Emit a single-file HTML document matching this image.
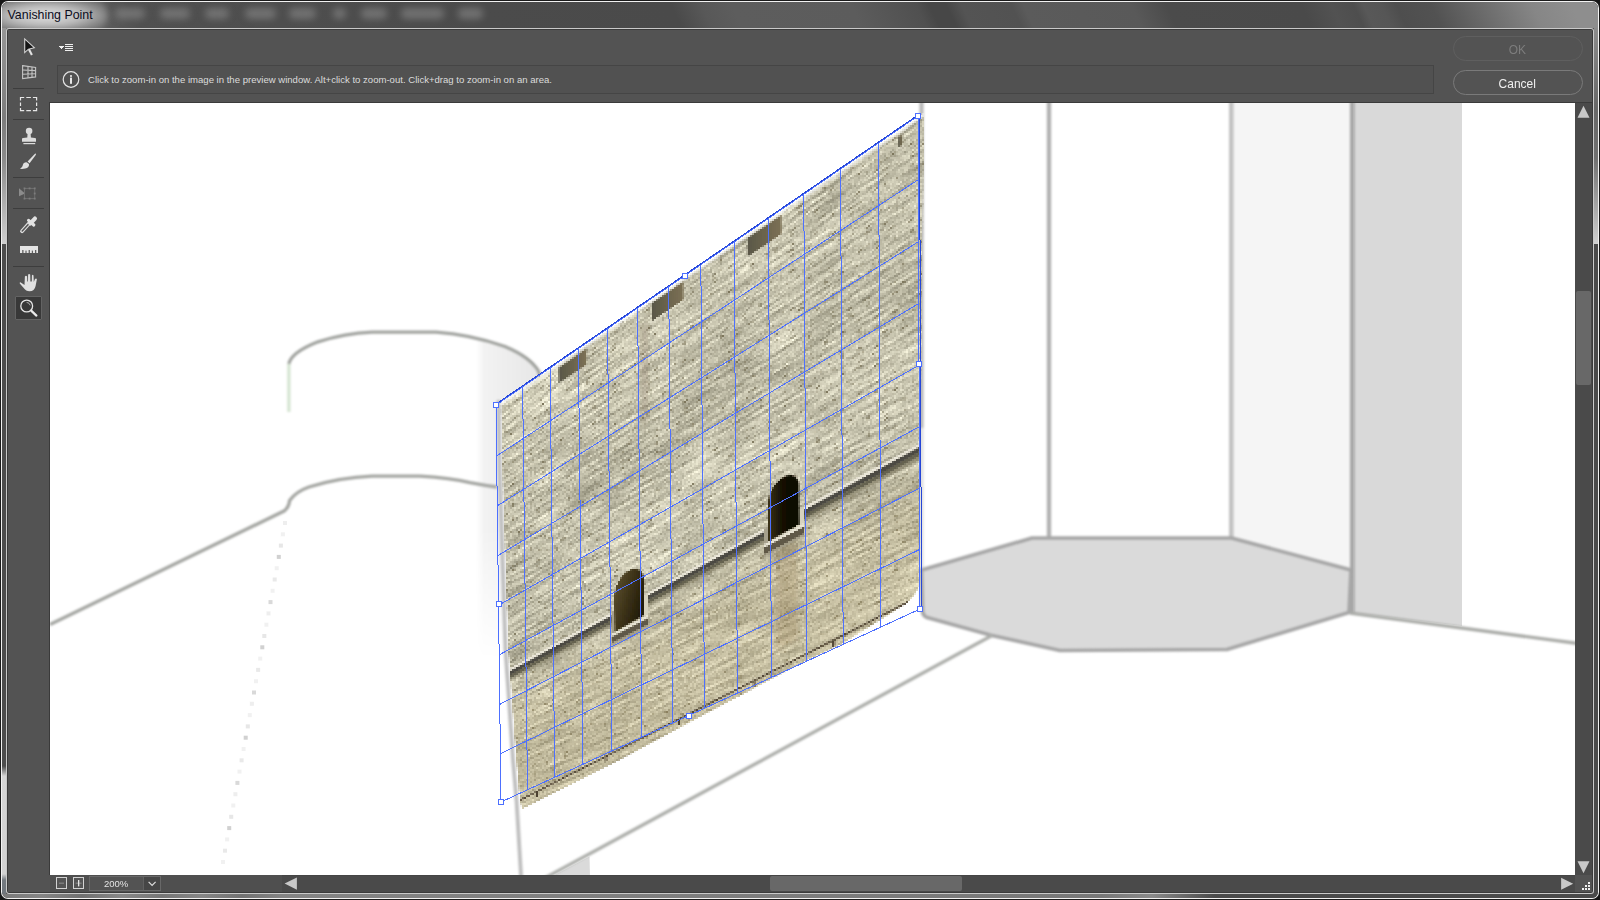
<!DOCTYPE html>
<html><head><meta charset="utf-8"><title>Vanishing Point</title>
<style>
*{box-sizing:border-box;margin:0;padding:0}
html,body{width:1600px;height:900px;overflow:hidden;background:#161616;font-family:"Liberation Sans",sans-serif}
.abs{position:absolute}
#win{position:absolute;left:0;top:0;width:1600px;height:900px;border-radius:8px;background:#1b1b1b;overflow:hidden}
#hl{position:absolute;left:1px;top:1px;width:1598px;height:898px;border-radius:7px;background:#f2f2f2;overflow:hidden}
#glass{position:absolute;left:1px;top:1px;width:1596px;height:896px;border-radius:6px;background:#4c4c4c;overflow:hidden}
/* all glass children are in glass coords (offset 2,2) */
#tb{position:absolute;left:0;top:0;width:1596px;height:26px;overflow:hidden;background:#4c4c4c}
#tbi{position:absolute;left:-20px;top:0;width:1680px;height:26px;transform-origin:0 0;transform:skewX(24.8deg);background:linear-gradient(90deg,#5c5c5c 18px,#5a5a5a 118px,#505050 148px,#4b4b4b 498px,#4a4a4a 688px,#585858 718px,#5d5d5d 748px,#5c5c5c 868px,#505050 933px,#474747 946px,#474747 963px,#545454 978px,#525252 1028px,#5b5b5b 1040px,#595959 1148px,#4b4b4b 1183px,#4a4a4a 1318px,#525252 1348px,#4e4e4e 1370px,#585858 1380px,#565656 1398px,#4e4e4e 1413px,#525252 1448px,#6c6c6c 1498px,#868686 1548px,#8e8e8e 1588px,#8e8e8e 1678px)}
#ttlglow{position:absolute;left:-18px;top:-3px;width:124px;height:33px;border-radius:17px;background:radial-gradient(ellipse at 50% 50%,rgba(255,255,255,.8) 0%,rgba(255,255,255,.62) 40%,rgba(255,255,255,.25) 70%,rgba(255,255,255,0) 100%);filter:blur(3px)}
.blob{position:absolute;top:6px;height:11px;border-radius:5px;background:#888;filter:blur(3.5px);opacity:.62}
#gl{position:absolute;left:0;top:26px;width:4px;height:866px;background:linear-gradient(180deg,#969696 0px,#7c7c7c 90px,#8a8a8a 130px,#cfcfcf 216px,#4d4d4d 216.5px,#4d4d4d 738px,#d6d6d6 748px,#d2d2d2 846px,#747a80 852px,#70767c 866px)}
#gr{position:absolute;left:1592px;top:26px;width:4px;height:866px;background:linear-gradient(180deg,#8c8c8c 0px,#686868 80px,#707070 130px,#d0d0d0 216px,#4a4a4a 216.5px,#4a4a4a 866px)}
#gb{position:absolute;left:0;top:892px;width:1596px;height:4px;background:linear-gradient(90deg,#7a7a7a 0,#858585 40px,#707070 80px,#888 120px,#767676 160px,#868686 200px,#727272 240px,#848484 280px,#787878 1100px,#8a8a8a 1150px,#4a4a4a 1213px,#4a4a4a 1596px)}
#inl{position:absolute;left:6px;top:28px;width:1588px;height:866px;border-radius:3px;background:#c9c9c9}
#ind{position:absolute;left:7px;top:29px;width:1586px;height:864px;border-radius:2px;background:#3b3b3b}
#c{position:absolute;left:8px;top:30px;width:1584px;height:862px;background:#535353;overflow:hidden}
/* content coords: offset (8,30) */
#title{position:absolute;left:7.5px;top:7px;font-size:12.4px;line-height:16px;color:#0c0c1c;white-space:nowrap;letter-spacing:0}
.sep{position:absolute;left:5px;width:31px;height:1px;background:#3d3d3d}
#info{position:absolute;left:49px;top:35px;width:1377px;height:29px;border:1px solid #454545;background:#515151}
#infotxt{position:absolute;left:80px;top:42.5px;font-size:9.57px;line-height:14px;color:#dcdcdc;white-space:nowrap}
.btn{position:absolute;left:1444.5px;width:130px;height:25px;border-radius:12.5px;text-align:center;font-size:13px;line-height:25px}
.btn span{display:inline-block;transform:scaleX(.92);transform-origin:50% 50%}
#ok{top:5.5px;border:1px solid #5f5f5f;color:#7d7d7d}
#cancel{top:39.5px;border:1px solid #7a7a7a;color:#f0f0f0}
#cv{position:absolute;left:41px;top:72px;width:1526px;height:773px;background:#3a3a3a}
#cvw{position:absolute;left:42px;top:73px;width:1525px;height:772px;background:#fff;overflow:hidden}
#vs{position:absolute;left:1567px;top:72px;width:17px;height:773px;background:#4a4a4a;border-top:1px solid #3b3b3b}
#vthumb{position:absolute;left:1568px;top:261px;width:15px;height:94px;border-radius:2px;background:#686868}
#hsl{position:absolute;left:42px;top:845px;width:232px;height:17px;background:#4f4f4f}
#hs{position:absolute;left:274px;top:845px;width:1293px;height:17px;background:#4a4a4a;border-top:1px solid #454545}
#hthumb{position:absolute;left:762px;top:846px;width:192px;height:15px;border-radius:2px;background:#686868}
#corner{position:absolute;left:1567px;top:845px;width:17px;height:17px;background:#535353}
.dot{position:absolute;width:2px;height:2px;background:#f0f0f0}
.zb{position:absolute;top:847px;width:11px;height:12px;border:1px solid #d2d2d2;background:#555}
#zf{position:absolute;left:81px;top:846px;width:72px;height:15px;border:1px solid #686868;background:#535353}
#zdd{position:absolute;left:135px;top:847px;width:17px;height:13px;background:#464646;border-left:1px solid #606060}
#ztxt{position:absolute;left:81px;top:846px;width:54px;height:15px;text-align:center;font-size:9.5px;line-height:15px;color:#e4e4e4;padding-left:15px;text-align:left}
#zsel{position:absolute;left:7px;top:265.5px;width:27px;height:24.5px;border:1px solid #636363;background:#383838;border-radius:1px}
svg{position:absolute;left:0;top:0;overflow:visible}
</style></head><body>
<div id="win"><div id="hl"><div id="glass">
 <div id="tb"><div id="tbi"></div></div>
 <div class="blob" style="left:113px;width:30px"></div><div class="blob" style="left:158px;width:30px"></div>
 <div class="blob" style="left:203px;width:24px"></div><div class="blob" style="left:243px;width:31px"></div>
 <div class="blob" style="left:287px;width:27px"></div><div class="blob" style="left:331px;width:13px"></div>
 <div class="blob" style="left:359px;width:26px"></div><div class="blob" style="left:399px;width:43px"></div>
 <div class="blob" style="left:456px;width:25px"></div>
 <div id="ttlglow"></div>
 <div id="gl"></div><div id="gr"></div><div id="gb"></div>
</div></div>
<div id="inl"></div><div id="ind"></div>
<div id="title">Vanishing Point</div>
<div id="c">
 <!-- top bar -->
 <div id="info"></div>
 <div id="infotxt">Click to zoom-in on the image in the preview window. Alt+click to zoom-out. Click+drag to zoom-in on an area.</div>
 <div class="btn" id="ok"><span>OK</span></div>
 <div class="btn" id="cancel"><span>Cancel</span></div>
 <!-- toolbar separators -->
 <div class="sep" style="top:58px"></div><div class="sep" style="top:89px"></div>
 <div class="sep" style="top:147px"></div><div class="sep" style="top:178px"></div>
 <div class="sep" style="top:236px"></div>
 <div id="zsel"></div>
 <!-- canvas -->
 <div id="cv"></div>
 <div id="cvw">
<!-- background drawing -->
<svg width="1525" height="772" viewBox="50 103 1525 772">
<defs>
<filter id="bl" x="-5%" y="-5%" width="110%" height="110%"><feGaussianBlur stdDeviation="0.9"/></filter>
<filter id="bl2" x="-5%" y="-5%" width="110%" height="110%"><feGaussianBlur stdDeviation="0.7"/></filter>
<linearGradient id="shade" gradientUnits="userSpaceOnUse" x1="476" y1="0" x2="545" y2="0">
<stop offset="0" stop-color="#000" stop-opacity="0"/><stop offset="0.12" stop-color="#000" stop-opacity="0.05"/><stop offset="1" stop-color="#000" stop-opacity="0.1"/></linearGradient>
<linearGradient id="shadefade" gradientUnits="userSpaceOnUse" x1="0" y1="330" x2="0" y2="660">
<stop offset="0" stop-color="#fff"/><stop offset="0.6" stop-color="#fff"/><stop offset="1" stop-color="#000"/></linearGradient>
<mask id="shademask"><rect x="470" y="320" width="90" height="350" fill="url(#shadefade)"/></mask>
<clipPath id="cylclip"><path d="M476,700 L476,337 Q505,344 528,358 Q540,366 541,380 L541,700 Z"/></clipPath>
</defs>
<g filter="url(#bl2)">
 <rect x="1233" y="100" width="120" height="470" fill="#f5f5f5"/>
 <path d="M1354,100 L1462,100 L1462,626 L1354,613 Z" fill="#d9d9d9"/>
 <path d="M921.5,570 L1032,538 L1231.5,538 L1351,570 L1349,612.5 L1227,649.5 L1060,650.5 L992,635.5 L927,617.5 Q922.3,615.5 922.6,610 Z" fill="#dadada"/>
 <path d="M551,877 L589.5,856.5 L590,877 Z" fill="#dadada"/>
</g>
<g clip-path="url(#cylclip)"><rect x="476" y="330" width="70" height="340" fill="url(#shade)" mask="url(#shademask)"/></g>
<g filter="url(#bl)" fill="none" stroke-linecap="butt">
 <path d="M921.5,100 L921.5,428" stroke="#b8b8b8" stroke-width="4.2"/><path d="M921.5,428 L921.5,572" stroke="#e0e0e0" stroke-width="4.2"/>
 <path d="M1049,100 L1049,538" stroke="#b2b2b2" stroke-width="4.4"/>
 <path d="M1231.3,100 L1231.3,538" stroke="#c2c2c2" stroke-width="4.6"/>
 <path d="M1352.3,100 L1352.3,613" stroke="#a8a8a8" stroke-width="4.8"/>
 <path d="M921.5,570 L1032,538 L1231.5,538 L1351,570 L1349,612.5 L1227,649.5 L1060,650.5 L992,635.5 L927,617.5 Q922.3,615.5 922.6,610 Z" stroke="#a6a6a6" stroke-width="3.6" stroke-linejoin="round"/>
 <path d="M1350,613 L1580,643.8" stroke="#aaaca8" stroke-width="3.4"/>
 <path d="M992,635.5 L545,878" stroke="#adafab" stroke-width="3.4"/>
 <path d="M498.6,400 L499.5,470 L505.5,650 L509,700 L513,760 L516.5,800 L521.3,880" stroke="#bebebe" stroke-width="3.8" stroke-linejoin="round"/>
 <!-- cylinder -->
 <path d="M288.9,412 L288.9,364" stroke="#d4e4d0" stroke-width="3.2"/>
 <path d="M288.9,364 Q291,352.5 318,341.8 Q345,333.5 372,332.2 L436,332.2 Q470,334.5 505,346.5 Q530,357 538.5,371 Q541,378 541,384" stroke="#a2a4a0" stroke-width="3.3"/>
 <path d="M50,624.5 L284.5,510.8 Q289,507 289.6,500.5 Q296,491.5 309,487 Q340,477.5 372,476.2 L420,476.2 Q450,478 470,482.6 Q485,485.5 497,487" stroke="#a4a6a2" stroke-width="3.3"/>
</g>
<!-- dotted line -->
<g fill="#cfcfcf" filter="url(#bl2)">
<rect x="283.0" y="521.0" width="4" height="4" opacity="0.35"/>
<rect x="280.9" y="532.3" width="4" height="4" opacity="0.30"/>
<rect x="278.9" y="543.6" width="4" height="4" opacity="0.50"/>
<rect x="276.8" y="554.9" width="4" height="4" opacity="0.95"/>
<rect x="274.7" y="566.2" width="4" height="4" opacity="0.30"/>
<rect x="272.7" y="577.5" width="4" height="4" opacity="0.45"/>
<rect x="270.6" y="588.8" width="4" height="4" opacity="0.30"/>
<rect x="268.5" y="600.1" width="4" height="4" opacity="0.80"/>
<rect x="266.5" y="611.4" width="4" height="4" opacity="0.35"/>
<rect x="264.4" y="622.7" width="4" height="4" opacity="0.30"/>
<rect x="262.3" y="634.0" width="4" height="4" opacity="0.50"/>
<rect x="260.3" y="645.3" width="4" height="4" opacity="0.95"/>
<rect x="258.2" y="656.6" width="4" height="4" opacity="0.30"/>
<rect x="256.1" y="667.9" width="4" height="4" opacity="0.45"/>
<rect x="254.0" y="679.2" width="4" height="4" opacity="0.30"/>
<rect x="252.0" y="690.5" width="4" height="4" opacity="0.80"/>
<rect x="249.9" y="701.8" width="4" height="4" opacity="0.35"/>
<rect x="247.8" y="713.1" width="4" height="4" opacity="0.30"/>
<rect x="245.8" y="724.4" width="4" height="4" opacity="0.50"/>
<rect x="243.7" y="735.7" width="4" height="4" opacity="0.95"/>
<rect x="241.6" y="747.0" width="4" height="4" opacity="0.30"/>
<rect x="239.6" y="758.3" width="4" height="4" opacity="0.45"/>
<rect x="237.5" y="769.6" width="4" height="4" opacity="0.30"/>
<rect x="235.4" y="780.9" width="4" height="4" opacity="0.80"/>
<rect x="233.4" y="792.2" width="4" height="4" opacity="0.35"/>
<rect x="231.3" y="803.5" width="4" height="4" opacity="0.30"/>
<rect x="229.2" y="814.8" width="4" height="4" opacity="0.50"/>
<rect x="227.2" y="826.1" width="4" height="4" opacity="0.95"/>
<rect x="225.1" y="837.4" width="4" height="4" opacity="0.30"/>
<rect x="223.0" y="848.7" width="4" height="4" opacity="0.45"/>
<rect x="221.0" y="860.0" width="4" height="4" opacity="0.30"/>
</g>
</svg>
<!-- wall texture -->
<svg width="0" height="0"><defs><filter id="pix" filterUnits="userSpaceOnUse" x="0" y="0" width="1525" height="772" color-interpolation-filters="sRGB">
<feFlood x="0" y="0" width="1" height="1" flood-color="#000"/>
<feComposite width="2" height="2"/>
<feTile result="a"/>
<feComposite in="SourceGraphic" in2="a" operator="in" result="s"/>
<feOffset in="s" dx="1" dy="0" result="s1"/><feOffset in="s" dx="0" dy="1" result="s2"/><feOffset in="s" dx="1" dy="1" result="s3"/>
<feMerge result="pm"><feMergeNode in="s"/><feMergeNode in="s1"/><feMergeNode in="s2"/><feMergeNode in="s3"/></feMerge>
<feGaussianBlur in="pm" stdDeviation="0.45"/>
</filter></defs></svg>
<div style="position:absolute;left:0;top:0;width:1525px;height:772px;filter:url(#pix)">
<div style="position:absolute;left:0;top:0;width:1525px;height:772px;clip-path:polygon(450.5px 299.5px,868.5px 12.6px,873.6px 10.0px,872.5px 97.0px,869.9px 297.0px,870.2px 471.0px,868.5px 483.0px,863.0px 493.0px,856.0px 500.0px,792.0px 540.0px,750.0px 560.0px,650.0px 613.0px,570.0px 656.0px,471.5px 705.5px,469.5px 697.0px,466.0px 657.0px,461.5px 597.0px,458.0px 547.0px,452.0px 367.0px)">
<div style="position:absolute;left:-50px;top:-103px;width:530px;height:510px;transform-origin:0 0;transform:matrix3d(0.4733521435,-0.5985030139,0,-0.000368394682,0.01884421423,0.840574138,0,1.682145221e-05,0,0,1,0,496,405,0,1)">
<svg width="530" height="510" viewBox="0 0 530 510">
<defs>
<filter id="wall" x="0" y="0" width="100%" height="100%" color-interpolation-filters="sRGB">
 <feTurbulence type="fractalNoise" baseFrequency="0.33" numOctaves="1" seed="7"/>
 <feColorMatrix type="matrix" values="1 0 0 0 0 1 0 0 0 0 1 0 0 0 0 0 0 0 0 1" result="sp"/>
 <feTurbulence type="fractalNoise" baseFrequency="0.02 0.26" numOctaves="2" seed="11"/>
 <feColorMatrix type="matrix" values="1 0 0 0 0 1 0 0 0 0 1 0 0 0 0 0 0 0 0 1" result="st"/>
 <feTurbulence type="fractalNoise" baseFrequency="0.008 0.01" numOctaves="2" seed="5"/>
 <feColorMatrix type="matrix" values="1 0 0 0 0 1 0 0 0 0 1 0 0 0 0 0 0 0 0 1" result="lo"/>
 <feTurbulence type="fractalNoise" baseFrequency="0.11 0.38" numOctaves="1" seed="23"/>
 <feColorMatrix type="matrix" values="0 0 0 0 0  0 0 0 0 0  0 0 0 0 0  -9 0 0 0 3.15" result="dash"/>
 <feComposite in="sp" in2="st" operator="arithmetic" k1="0" k2="0.5" k3="0.62" k4="-0.06" result="m1"/>
 <feComposite in="m1" in2="lo" operator="arithmetic" k1="0" k2="1" k3="0.2" k4="-0.1" result="m2"/>
 <feColorMatrix in="m2" type="matrix" values="0.8 0 0 0 0.373  0.8 0 0 0 0.361  0.78 0 0 0 0.287  0 0 0 0 1" result="col"/>
 <feFlood flood-color="#7d765c" result="dk"/>
 <feComposite in="dk" in2="dash" operator="in" result="dd"/>
 <feMerge><feMergeNode in="col"/><feMergeNode in="dd"/></feMerge>
</filter>
<linearGradient id="a1g" x1="0" y1="0" x2="1" y2="0"><stop offset="0" stop-color="#3c3216"/><stop offset="0.45" stop-color="#141004"/><stop offset="1" stop-color="#0a0802"/></linearGradient>
<linearGradient id="a2g" x1="0" y1="0" x2="1" y2="0.6"><stop offset="0" stop-color="#5e5230"/><stop offset="0.6" stop-color="#3a3016"/><stop offset="1" stop-color="#241e0a"/></linearGradient>
<linearGradient id="low" x1="0" y1="0" x2="0" y2="1"><stop offset="0" stop-color="#c8b070" stop-opacity="0"/><stop offset="0.62" stop-color="#c8b070" stop-opacity="0"/><stop offset="0.75" stop-color="#c8b070" stop-opacity="0.16"/><stop offset="1" stop-color="#c8b070" stop-opacity="0.2"/></linearGradient>
<linearGradient id="topfade" x1="0" y1="0" x2="0" y2="1"><stop offset="0" stop-color="#fff" stop-opacity="0.95"/><stop offset="0.5" stop-color="#fff" stop-opacity="0.6"/><stop offset="1" stop-color="#fff" stop-opacity="0"/></linearGradient>
<linearGradient id="swg" x1="0" y1="0" x2="1" y2="0"><stop offset="0" stop-color="#595747"/><stop offset="1" stop-color="#7c7054"/></linearGradient>
<filter id="b3"><feGaussianBlur stdDeviation="3"/></filter>
<filter id="b1"><feGaussianBlur stdDeviation="0.5"/></filter>
</defs>
<rect x="0" y="0" width="530" height="510" filter="url(#wall)"/>
<rect x="0" y="0" width="530" height="510" fill="url(#low)"/>
<!-- stains -->
<g filter="url(#b3)">
<rect x="364" y="348" width="26" height="105" fill="#8a7040" opacity="0.28"/>
<rect x="203" y="20" width="10" height="110" fill="#6a6048" opacity="0.25"/>
</g>
<g filter="url(#b1)"><path d="M-5.0,326.6 L160.0,324.5 L160.0,330.0 L-5.0,332.1 Z" fill="#4c4a42" opacity="1"/>
<path d="M-5.0,332.1 L160.0,330.0 L160.0,334.0 L-5.0,336.1 Z" fill="#65624f" opacity="1"/>
<path d="M-5.0,336.1 L160.0,334.0 L160.0,337.5 L-5.0,339.6 Z" fill="#8e8870" opacity="0.75"/>
<path d="M-5.0,323.6 L160.0,321.5 L160.0,324.9 L-5.0,327.0 Z" fill="#ece8da" opacity="1"/>
<path d="M209.0,323.9 L352.0,322.1 L352.0,327.6 L209.0,329.4 Z" fill="#4c4a42" opacity="1"/>
<path d="M209.0,329.4 L352.0,327.6 L352.0,331.6 L209.0,333.4 Z" fill="#65624f" opacity="1"/>
<path d="M209.0,333.4 L352.0,331.6 L352.0,335.1 L209.0,336.9 Z" fill="#8e8870" opacity="0.75"/>
<path d="M209.0,320.9 L352.0,319.1 L352.0,322.5 L209.0,324.3 Z" fill="#ece8da" opacity="1"/>
<path d="M397.0,321.5 L532.0,319.9 L532.0,325.4 L397.0,327.0 Z" fill="#4c4a42" opacity="1"/>
<path d="M397.0,327.0 L532.0,325.4 L532.0,329.4 L397.0,331.0 Z" fill="#65624f" opacity="1"/>
<path d="M397.0,331.0 L532.0,329.4 L532.0,332.9 L397.0,334.5 Z" fill="#8e8870" opacity="0.75"/>
<path d="M397.0,318.5 L532.0,316.9 L532.0,320.2 L397.0,321.9 Z" fill="#ece8da" opacity="1"/>
<path d="M357.0,335.0 L357.0,294.0 A17.5,17.5 0 0 1 392.0,294.0 L392.0,334.0 Z" fill="url(#a1g)"/>
<rect x="392" y="318.6" width="5" height="18.4" fill="#d6d2be"/>
<rect x="352" y="319.1" width="4" height="20.9" fill="#a6a08c"/>
<rect x="352" y="335.5" width="46" height="3.5" fill="#e8e4d4"/>
<rect x="352" y="339" width="46" height="7" fill="#5e5846"/>
<rect x="352" y="346" width="46" height="3" fill="#a09a84" opacity="0.8"/>
<path d="M165.0,345.5 L165.0,304.5 A19.5,19.5 0 0 1 204.0,304.5 L204.0,344.0 Z" fill="url(#a2g)"/>
<rect x="204" y="320.9" width="5" height="27.1" fill="#d6d2be"/>
<rect x="160" y="321.5" width="4" height="29.5" fill="#a6a08c"/>
<rect x="160" y="346" width="50" height="3.5" fill="#e8e4d4"/>
<rect x="160" y="349.5" width="50" height="7" fill="#5e5846"/>
<rect x="160" y="356.5" width="50" height="3" fill="#a09a84" opacity="0.8"/>
<rect x="335.0" y="4.5" width="39.0" height="19.8" fill="url(#swg)"/>
<rect x="333.0" y="24.3" width="43.0" height="2.6" fill="#dedac8" opacity="0.6"/>
<rect x="217.5" y="4.0" width="40.0" height="20.0" fill="url(#swg)"/>
<rect x="215.5" y="24.0" width="44.0" height="2.6" fill="#dedac8" opacity="0.6"/>
<rect x="91.5" y="5.5" width="39.0" height="18.0" fill="url(#swg)"/>
<rect x="89.5" y="23.5" width="43.0" height="2.6" fill="#dedac8" opacity="0.6"/>
<rect x="500.0" y="7.0" width="4.0" height="10.0" fill="url(#swg)"/>
<rect x="498.0" y="17.0" width="8.0" height="2.6" fill="#dedac8" opacity="0.6"/>
<path d="M0,488.7 L532,466.0" stroke="#4e4230" stroke-width="1.8" fill="none"/>
<path d="M0,486.5 L520,464.3" stroke="#e6e2d2" stroke-width="1.2" fill="none" opacity="0.3"/>
<rect x="52" y="486.5" width="2.4" height="6.5" fill="#4e4230"/>
<rect x="150" y="482.3" width="2.4" height="6.5" fill="#4e4230"/>
<rect x="246" y="478.2" width="2.4" height="6.5" fill="#4e4230"/>
<rect x="338" y="474.3" width="2.4" height="6.5" fill="#4e4230"/>
<rect x="428" y="470.5" width="2.4" height="6.5" fill="#4e4230"/>
<rect x="500" y="467.4" width="2.4" height="6.5" fill="#4e4230"/></g>
<rect x="0" y="0" width="530" height="5.5" fill="url(#topfade)"/>
</svg>
</div>
</div>
</div>
<!-- grid overlay -->
<svg width="1525" height="772" viewBox="50 103 1525 772">
<g stroke="#4d70ff" stroke-width="1" fill="none" shape-rendering="crispEdges">
<line x1="496.00" y1="405.00" x2="501.00" y2="802.00"/>
<line x1="522.64" y1="386.76" x2="527.49" y2="789.80"/>
<line x1="550.08" y1="367.96" x2="554.78" y2="777.23"/>
<line x1="578.37" y1="348.59" x2="582.91" y2="764.27"/>
<line x1="607.55" y1="328.61" x2="611.91" y2="750.91"/>
<line x1="637.65" y1="307.99" x2="641.82" y2="737.13"/>
<line x1="668.73" y1="286.71" x2="672.69" y2="722.91"/>
<line x1="700.83" y1="264.73" x2="704.57" y2="708.23"/>
<line x1="734.00" y1="242.01" x2="737.50" y2="693.06"/>
<line x1="768.30" y1="218.52" x2="771.55" y2="677.38"/>
<line x1="803.78" y1="194.22" x2="806.75" y2="661.16"/>
<line x1="840.52" y1="169.06" x2="843.19" y2="644.38"/>
<line x1="878.57" y1="143.01" x2="880.91" y2="627.00"/>
<line x1="918.00" y1="116.00" x2="920.00" y2="609.00"/>
<line x1="496.00" y1="405.00" x2="918.00" y2="116.00"/>
<line x1="496.63" y1="455.98" x2="918.25" y2="179.66"/>
<line x1="497.26" y1="505.85" x2="918.50" y2="241.67"/>
<line x1="497.88" y1="555.62" x2="918.75" y2="303.52"/>
<line x1="498.51" y1="605.30" x2="919.00" y2="365.22"/>
<line x1="499.13" y1="654.87" x2="919.25" y2="426.77"/>
<line x1="499.76" y1="704.35" x2="919.50" y2="488.17"/>
<line x1="500.38" y1="753.72" x2="919.75" y2="549.41"/>
<line x1="501.00" y1="802.00" x2="920.00" y2="609.00"/>
</g>
<g stroke="#2646d6" stroke-width="1" fill="none" shape-rendering="crispEdges">
<line x1="496" y1="404" x2="918" y2="115"/>
<line x1="919.5" y1="116" x2="921.5" y2="609"/>
</g>
<g stroke="#4d70ff" stroke-width="1" fill="#fff" shape-rendering="crispEdges">
<rect x="493.5" y="402.5" width="5" height="5"/>
<rect x="915.5" y="113.5" width="5" height="5"/>
<rect x="917.5" y="606.5" width="5" height="5"/>
<rect x="498.5" y="799.5" width="5" height="5"/>
<rect x="682.5" y="273.5" width="5" height="5"/>
<rect x="916.5" y="361.5" width="5" height="5"/>
<rect x="686.5" y="713.5" width="5" height="5"/>
<rect x="496.5" y="601.5" width="5" height="5"/>
</g>
</svg>

 </div>
 <div id="vs"></div><div id="vthumb"></div>
 <div id="hsl"></div><div id="hs"></div><div id="hthumb"></div>
 <div id="corner"></div>
 <div class="dot" style="left:1580px;top:852px"></div>
 <div class="dot" style="left:1577px;top:855px"></div><div class="dot" style="left:1580px;top:855px"></div>
 <div class="dot" style="left:1574px;top:858px"></div><div class="dot" style="left:1577px;top:858px"></div><div class="dot" style="left:1580px;top:858px"></div>
 <div class="zb" style="left:48px"></div><div class="zb" style="left:65px"></div>
 <div id="zf"></div><div id="zdd"></div><div id="ztxt">200%</div>
 <!-- icons: svg in content coords via viewBox in SCREEN coords -->
 <svg width="1584" height="862" viewBox="8 30 1584 862">
<!-- arrow tool -->
<path d="M24.7,38.9 L24.7,52.6 L28.4,49.2 L34.3,47.7 Z" fill="#161616" stroke="#d4d4d4" stroke-width="1.1" stroke-linejoin="miter"/>
<path d="M28.9,49.3 L31.9,55" stroke="#e2e2e2" stroke-width="2.1" fill="none"/>
<!-- menu icon -->
<g fill="#efefef" shape-rendering="crispEdges">
<rect x="65" y="44" width="8" height="1"/><rect x="65" y="46" width="8" height="1"/><rect x="65" y="48" width="8" height="1"/><rect x="65" y="50" width="8" height="1"/>
<rect x="59" y="46" width="5" height="1"/><rect x="60" y="47" width="3" height="1"/><rect x="61" y="48" width="1" height="1"/>
</g>
<!-- perspective grid tool -->
<g fill="none" stroke="#c4c4c4" stroke-width="1.1">
<path d="M22.6,65.6 L35.6,67.4 L35.6,76.9 L22.6,78.6 Z"/>
<path d="M22.6,70 L35.6,70.6 M22.6,74.3 L35.6,73.7 M28,66.3 L28,77.9 M32,66.9 L32,77.4"/>
</g>
<!-- info icon -->
<circle cx="71" cy="79.5" r="7.8" fill="none" stroke="#e4e4e4" stroke-width="1.2"/>
<rect x="70" y="75.2" width="2" height="1.6" fill="#e8e8e8"/><rect x="70" y="77.6" width="2" height="6.2" fill="#e8e8e8"/>
<!-- marquee -->
<g fill="none" stroke="#e6e6e6" stroke-width="1.2">
<path d="M20.5,100.5 L20.5,97.5 L24.2,97.5 M26.3,97.5 L30.9,97.5 M32.9,97.5 L36.6,97.5 L36.6,100.5 M36.6,102.5 L36.6,105.9 M36.6,107.9 L36.6,110.6 L32.9,110.6 M30.9,110.6 L26.3,110.6 M24.2,110.6 L20.5,110.6 L20.5,107.9 M20.5,105.9 L20.5,102.5"/>
</g>
<!-- stamp -->
<g fill="#dcdcdc">
<circle cx="29.1" cy="131" r="3.3"/>
<path d="M27.6,133 L30.6,133 L30.9,137.6 L35,137.9 Q36,138 36,139 L36,141.7 L22,141.7 L22,139 Q22,138 23,137.9 L27.3,137.6 Z"/>
<rect x="23.4" y="143" width="11.8" height="1.2"/>
</g>
<!-- brush -->
<g fill="#e0e0e0">
<path d="M35.2,153.6 Q36.2,153.6 35.9,154.8 L29.6,163.2 L27.6,161.6 Z"/>
<path d="M27,162.4 L29,164 Q29.4,167.6 25.2,168.6 Q22.4,169.2 20,168.8 Q22.4,167.6 22.8,165.2 Q23.6,162 27,162.4 Z"/>
</g>
<!-- transform (disabled) -->
<path d="M19,188.2 L19,196.2 L25,193.4 Z" fill="#8c8c8c"/>
<rect x="24.5" y="188.4" width="10.2" height="10.2" fill="none" stroke="#6f6f6f" stroke-width="1"/>
<g fill="#7d7d7d"><rect x="23.6" y="187.5" width="1.8" height="1.8"/><rect x="28.7" y="187.5" width="1.8" height="1.8"/><rect x="33.8" y="187.5" width="1.8" height="1.8"/><rect x="33.8" y="192.6" width="1.8" height="1.8"/><rect x="23.6" y="197.7" width="1.8" height="1.8"/><rect x="28.7" y="197.7" width="1.8" height="1.8"/><rect x="33.8" y="197.7" width="1.8" height="1.8"/></g>
<!-- eyedropper -->
<path d="M22,231.2 L29.4,223" stroke="#dedede" stroke-width="3.8" stroke-linecap="round" fill="none"/>
<path d="M22.2,231 L28.2,224.4" stroke="#535353" stroke-width="1.5" stroke-linecap="round" fill="none"/>
<path d="M28.6,220.4 L33.8,225" stroke="#e2e2e2" stroke-width="3.2" stroke-linecap="round" fill="none"/>
<path d="M30.4,223.4 L34.9,218.6" stroke="#e2e2e2" stroke-width="4.2" stroke-linecap="round" fill="none"/>
<!-- ruler -->
<rect x="20" y="246" width="18" height="7" fill="#e4e4e4"/>
<g fill="#606060"><rect x="22.2" y="250" width="1.3" height="3"/><rect x="25.4" y="250.6" width="1.2" height="2.4"/><rect x="28.6" y="250" width="1.3" height="3"/><rect x="31.8" y="250.6" width="1.2" height="2.4"/><rect x="35" y="250" width="1.3" height="3"/></g>
<!-- hand -->
<path d="M20.4,282.2 L24.5,285 L24.9,276.6 Q26,275.1 27.1,276.6 L27.3,281.4 L28,281.4 L28.1,274.6 Q29.1,273.2 30.2,274.6 L30.4,281.4 L31.8,281.4 L31.9,275.4 Q32.7,274.1 33.5,275.4 L33.8,282 L35,279 Q36.3,277.7 36.9,279.3 L35.6,286 Q34.5,291.3 29.5,291.3 Q26,291.3 23.5,287.8 L19.8,283.6 Q19.4,282.2 20.4,282.2 Z" fill="#e0e0e0"/>
<!-- zoom -->
<circle cx="26.7" cy="306" r="5.9" fill="none" stroke="#e6e6e6" stroke-width="1.3"/>
<path d="M31.2,310.6 L36.4,315.6" stroke="#e8e8e8" stroke-width="2.2" stroke-linecap="round"/>
<path d="M26.6,302.4 Q29.6,302.6 30.2,305.4" stroke="#b8b8b8" stroke-width="0.9" fill="none"/>
<!-- scrollbar arrows -->
<g fill="#c9c9c9">
<path d="M1577.5,117.7 L1589.5,117.7 L1583.5,105.7 Z"/>
<path d="M1577.5,861.2 L1589.5,861.2 L1583.5,873.2 Z"/>
<path d="M284.6,883.6 L296.9,877.6 L296.9,889.7 Z"/>
<path d="M1561.1,877.8 L1561.1,889.8 L1573.2,883.8 Z"/>
</g>
<!-- zoom -/+ and chevron -->
<rect x="59" y="882.6" width="5" height="1.2" fill="#858585"/>
<rect x="75.6" y="882.6" width="6" height="1.2" fill="#858585"/>
<rect x="78" y="880" width="1.3" height="6.4" fill="#e6e6e6"/>
<path d="M148.6,881.8 L152.1,885.4 L155.6,881.8" fill="none" stroke="#dddddd" stroke-width="1.2"/>

 </svg>
</div>
</div>
</body></html>
